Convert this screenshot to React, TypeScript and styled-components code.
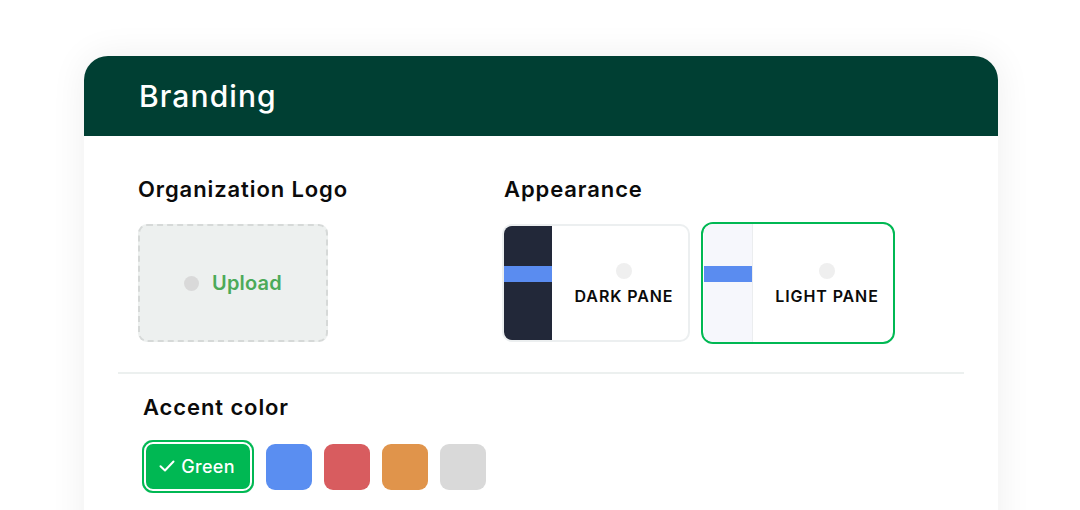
import React from "react";
import styled, { createGlobalStyle } from "styled-components";

const GlobalStyle = createGlobalStyle`
  html, body { margin: 0; padding: 0; background: #ffffff; }
  body { width: 1080px; height: 510px; overflow: hidden; font-family: Inter, "Noto Sans", sans-serif; }
  * { box-sizing: border-box; }
`;

const Page = styled.div`
  width: 1080px;
  height: 510px;
  padding: 56px 82px 0 84px;
  overflow: hidden;
`;

const Card = styled.div`
  width: 914px;
  height: 520px;
  background: #ffffff;
  border-radius: 24px 24px 0 0;
  box-shadow: 0 0 36px rgba(0, 0, 0, 0.07);
  display: flex;
  flex-direction: column;
`;

const Header = styled.div`
  height: 80px;
  background: #003f33;
  border-radius: 24px 24px 0 0;
  display: flex;
  align-items: center;
  padding: 0 55px 0;
`;

const Title = styled.h1`
  margin: 0;
  color: #ffffff;
  font-size: 30px;
  font-weight: 500;
  letter-spacing: 1.1px;
`;

const Body = styled.div`
  padding: 39px 34px 0;
  display: flex;
  flex-direction: column;
`;

const TopRow = styled.div`
  display: flex;
  padding-left: 20px;
`;

const Section = styled.div<{ $width?: number }>`
  width: ${(p) => (p.$width ? `${p.$width}px` : "auto")};
  display: flex;
  flex-direction: column;
`;

const Heading = styled.h2<{ $indent?: number }>`
  margin: 0 0 21px ${(p) => p.$indent ?? 0}px;
  font-size: 22px;
  line-height: 28px;
  font-weight: 600;
  color: #0b0b0b;
  letter-spacing: 0.9px;
`;

const UploadBox = styled.div`
  width: 190px;
  height: 118px;
  background: #edf0ef;
  border: 2px dashed #d6d9d8;
  border-radius: 9px;
  display: flex;
  align-items: center;
  justify-content: center;
  gap: 13px;
`;

const Dot = styled.span<{ $color: string; $size: number }>`
  width: ${(p) => p.$size}px;
  height: ${(p) => p.$size}px;
  border-radius: 50%;
  background: ${(p) => p.$color};
  flex-shrink: 0;
`;

const UploadText = styled.span`
  color: #4caa59;
  font-size: 20px;
  font-weight: 600;
  letter-spacing: 0.2px;
`;

const Panes = styled.div`
  display: flex;
  align-items: center;
  gap: 11px;
  margin: -2px 0 0 -2px;
  height: 122px;
`;

const PaneCard = styled.div<{ $selected?: boolean }>`
  width: ${(p) => (p.$selected ? 194 : 188)}px;
  height: ${(p) => (p.$selected ? 122 : 118)}px;
  border: 2px solid ${(p) => (p.$selected ? "#00b853" : "#eceff0")};
  border-radius: ${(p) => (p.$selected ? 12 : 10)}px;
  background: #ffffff;
  display: flex;
  overflow: hidden;
`;

const Stripe = styled.div<{ $dark?: boolean }>`
  width: ${(p) => (p.$dark ? 48 : 49)}px;
  margin-left: ${(p) => (p.$dark ? 0 : 1)}px;
  padding-top: ${(p) => (p.$dark ? 40 : 42)}px;
  flex-shrink: 0;
  background: ${(p) => (p.$dark ? "#222839" : "#f6f7fc")};
  border-right: ${(p) => (p.$dark ? "none" : "1px solid #ebedef")};
  display: flex;
  flex-direction: column;
`;

const StripeBar = styled.div`
  height: 16px;
  background: #5a8cf0;
`;

const PaneContent = styled.div`
  flex: 1;
  display: flex;
  flex-direction: column;
  align-items: center;
  justify-content: center;
  gap: 7px;
  padding: 2px 0 0 8px;
`;

const PaneLabel = styled.span`
  font-size: 16px;
  font-weight: 600;
  color: #0b0b0b;
  letter-spacing: 0.9px;
`;

const Divider = styled.hr`
  margin: 28px 0 19px;
  border: none;
  height: 2px;
  background: #ecf0ef;
`;

const Accent = styled.div`
  padding-left: 24px;
  display: flex;
  flex-direction: column;
`;

const Swatches = styled.div`
  display: flex;
  align-items: center;
  gap: 12px;
  margin-top: -2px;
`;

const SelectedSwatch = styled.button`
  width: 112px;
  height: 53px;
  border: none;
  border-radius: 11px;
  background: #00b853;
  box-shadow: inset 0 0 0 2px #00b853, inset 0 0 0 4px #ffffff;
  color: #ffffff;
  font-family: inherit;
  font-size: 18px;
  font-weight: 500;
  letter-spacing: 0.3px;
  display: flex;
  align-items: center;
  justify-content: center;
  gap: 6px;
  padding: 0 2px 1px 0;
`;

const Swatch = styled.div<{ $color: string }>`
  width: 46px;
  height: 46px;
  border-radius: 9px;
  background: ${(p) => p.$color};
`;

const CheckIcon = () => (
  <svg width="16" height="12" viewBox="0 0 16 12" fill="none">
    <path d="M1.5 6.2 L6 10.5 L14.5 1.5" stroke="#ffffff" strokeWidth="2" strokeLinecap="round" strokeLinejoin="round" />
  </svg>
);

export default function App() {
  return (
    <>
      <GlobalStyle />
      <Page>
        <Card>
          <Header>
            <Title>Branding</Title>
          </Header>
          <Body>
            <TopRow>
              <Section $width={366}>
                <Heading>Organization Logo</Heading>
                <UploadBox>
                  <Dot $color="#d9d9d9" $size={15} />
                  <UploadText>Upload</UploadText>
                </UploadBox>
              </Section>
              <Section>
                <Heading>Appearance</Heading>
                <Panes>
                  <PaneCard>
                    <Stripe $dark>
                      <StripeBar />
                    </Stripe>
                    <PaneContent>
                      <Dot $color="#efefef" $size={16} />
                      <PaneLabel>DARK PANE</PaneLabel>
                    </PaneContent>
                  </PaneCard>
                  <PaneCard $selected>
                    <Stripe>
                      <StripeBar />
                    </Stripe>
                    <PaneContent>
                      <Dot $color="#efefef" $size={16} />
                      <PaneLabel>LIGHT PANE</PaneLabel>
                    </PaneContent>
                  </PaneCard>
                </Panes>
              </Section>
            </TopRow>
            <Divider />
            <Accent>
              <Heading $indent={1}>Accent color</Heading>
              <Swatches>
                <SelectedSwatch>
                  <CheckIcon />
                  Green
                </SelectedSwatch>
                <Swatch $color="#5a8ef1" />
                <Swatch $color="#d85c5f" />
                <Swatch $color="#e0944b" />
                <Swatch $color="#d9d9d9" />
              </Swatches>
            </Accent>
          </Body>
        </Card>
      </Page>
    </>
  );
}
